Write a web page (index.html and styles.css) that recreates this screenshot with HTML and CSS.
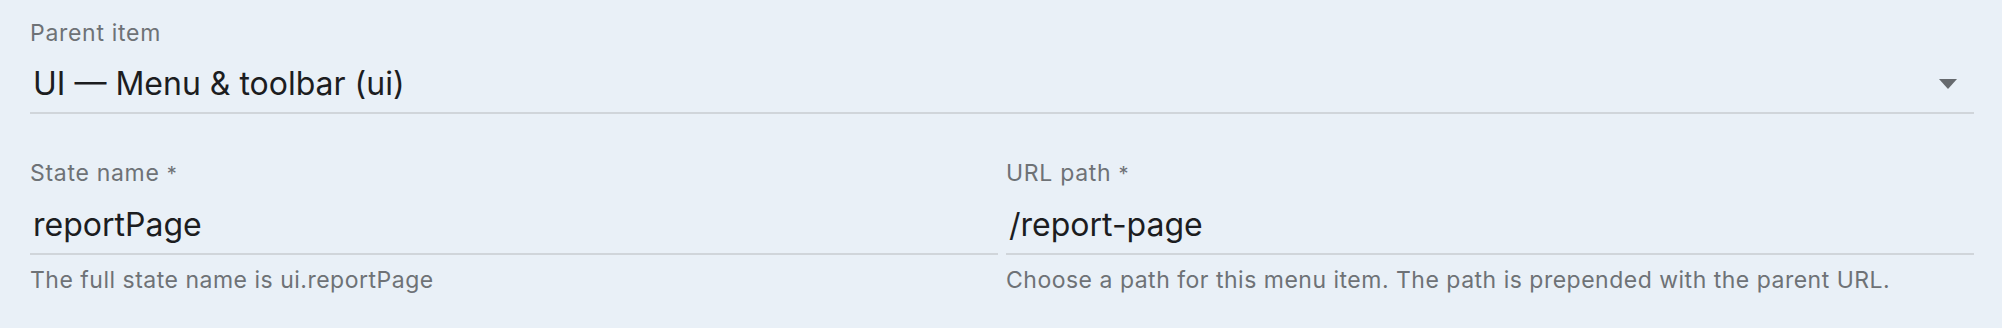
FILE: index.html
```html
<!DOCTYPE html>
<html lang="en">
<head>
   <meta charset="UTF-8">
   <meta name="viewport" content="width=device-width, initial-scale=1.0">
   <title>Menu item</title>
   <link rel="stylesheet" href="styles.css">
</head>
<body>
   <form class="item-form">
       <div class="field field-select">
           <label class="field-label">Parent item</label>
           <div class="field-input">
               <span class="field-value">UI — Menu &amp; toolbar (ui)</span>
               <svg class="select-arrow" width="18" height="10" viewBox="0 0 18 10">
                   <polygon points="0,0 18,0 9,10" fill="#666a6e"/>
               </svg>
           </div>
       </div>

       <div class="field-row">
           <div class="field">
               <label class="field-label">State name <span class="required">*</span></label>
               <div class="field-input">
                   <span class="field-value">reportPage</span>
               </div>
               <div class="field-hint">The full state name is ui.reportPage</div>
           </div>
           <div class="field">
               <label class="field-label">URL path <span class="required">*</span></label>
               <div class="field-input">
                   <span class="field-value">/report-page</span>
               </div>
               <div class="field-hint">Choose a path for this menu item. The path is prepended with the parent URL.</div>
           </div>
       </div>
   </form>
</body>
</html>
```

FILE: styles.css
```css
body {
    margin: 0;
    background-color: #e9f0f7;
    font-family: Inter, 'Noto Sans', sans-serif;
    color: #1c1d1f;
}

.item-form {
    padding: 19px 28px 0 30px;
}

.field-row {
    display: grid;
    grid-template-columns: 1fr 1fr;
    column-gap: 8px;
    margin-top: 45px;
}

.field-label {
    display: block;
    font-size: 23px;
    line-height: 28px;
    letter-spacing: 0.7px;
    color: #6e7276;
}

.required {
    font-size: 20px;
}

.field-input {
    display: flex;
    align-items: center;
    margin-top: 17px;
    padding: 0 0 8px 3px;
    border-bottom: 2px solid #d0d5da;
}

.field-value {
    flex: 1;
    font-size: 32px;
    line-height: 40px;
    color: #1c1d1f;
}

.select-arrow {
    margin-right: 17px;
}

.field-hint {
    margin-top: 11px;
    font-size: 23px;
    line-height: 28px;
    letter-spacing: 0.5px;
    color: #6e7276;
}
```
